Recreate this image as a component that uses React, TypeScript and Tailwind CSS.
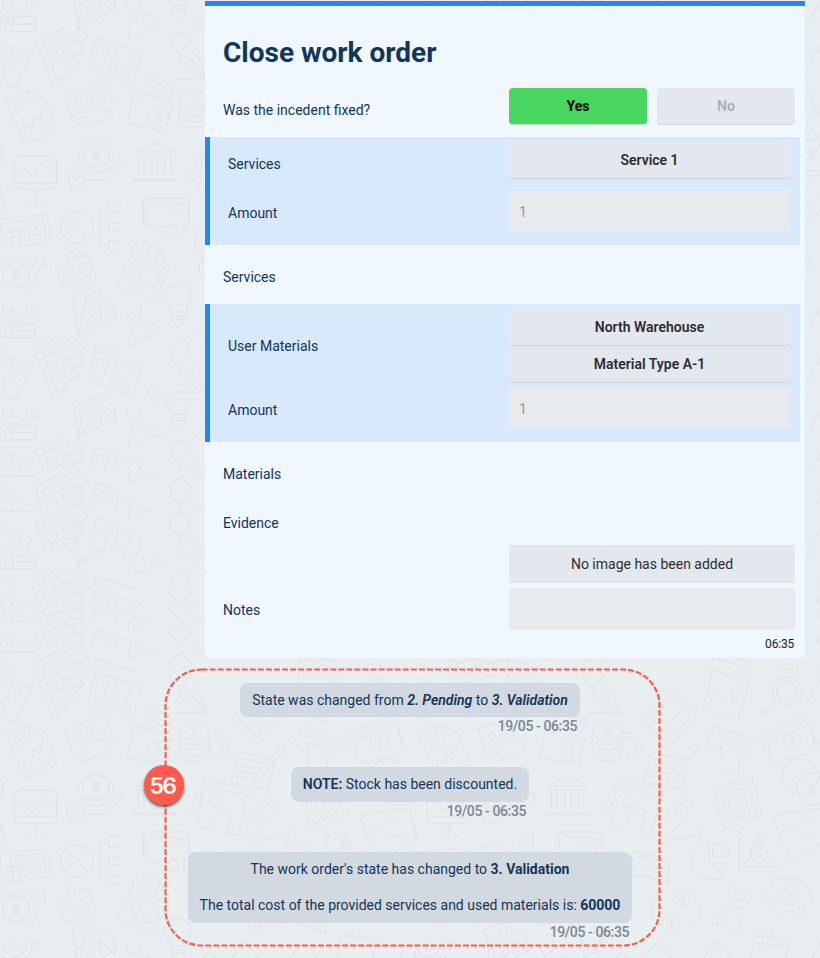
import React from 'react';

const TILE_W = 413;
const TILE_H = 307;

// Each band repeats the doodle tile with its own vertical offset: [top, bottom, offset].
const BANDS: [number, number, number][] = [
  [0, 352, 0],
  [352, 403, 313],
  [403, 471, 409],
  [471, 492, 445],
  [492, 508, 452],
  [508, 525, 480],
  [525, 555, 484],
  [555, 587, 538],
  [587, 605, 551],
  [605, 620, 566],
  [620, 646, 591],
  [646, 670, 621],
  [670, 958, 634],
];

function Dollar({ x, y, r }: { x: number; y: number; r: number }) {
  return (
    <g transform={`translate(${x} ${y})`}>
      <circle r={r} />
      <path d="M3-3C2-5-4-5-3-2C-2 0 3-1 3 2C3 5-3 5-4 2M0-6V6" />
    </g>
  );
}

function Doodles() {
  return (
    <g>
      <g>
        <circle cx="15" cy="3" r="17" />
        <circle cx="15" cy="3" r="12" />
        <path d="M19-2C15-6 12-2 13 2V8H19M10 3H17" />
        <path d="M-6 17H35V31H-6M0 17V31M6 17V31M13 17V31M0 24H35M35-4H40M35 2H40M35 8H38" />
      </g>
      <path d="M73-12L78 29L116 9L114-9L87-18ZM78 29L87-18M78 29L102-7M78 29L114-9M80 5L96-2L114 11" />
      <ellipse cx="134" cy="5" rx="7" ry="9" />
      <path d="M129 39C128 9 149 10 163 24ZM142 18L147 31" />
      <path d="M171 9V14L178 20L185 14V9ZM171 12H185M171 5C158-9 165-23 178-23S197-10 185 5" />
      <path d="M195 26L207 12L222 20M193 24L201 31" />
      <path d="M-8 38L32 54L15 88L-8 77M4 47L-3 60M13 51L4 67M21 55L12 71M-5 66L7 71L0 84" />
      <path d="M36 41L42 38L58 82L53 85ZM44 36L64 29L69 35L84 31L88 37L79 43L84 51L75 56L80 63L64 69L67 76L58 79M45 43L69 35M48 50L80 41M51 58L81 51M54 65L77 57M53 33L56 40M62 42L64 47M73 36L76 43M56 49L58 56M68 46L71 53M62 57L65 63M72 53L74 60" />
      <path d="M96 38L142 53L133 83L88 69ZM98 45L108 48L102 68L93 65ZM118 48L113 60M131 53L126 66M111 64L118 67L116 73L109 71ZM124 68L131 71L129 77L122 74Z" />
      <path d="M169 42L182 31L191 42L178 53ZM180 54C182 65 180 67 206 80C201 63 203 62 192 50M188 55L206 80M174 79H201" />
      <circle cx="205" cy="78" r="4" />
      <path d="M5 99L27 91L45 99L57 131L25 145ZM27 91L31 103L45 99M13 104L24 100M15 109L26 104M17 114L23 111M26 138L24 126L32 129L34 115L40 120L43 106M39 130L49 126M42 134L50 130" />
      <path d="M65 95L106 81L114 106L105 110L111 112L113 117L82 128L79 124L87 119L83 117L73 121ZM75 101L80 98L83 104L78 107ZM86 93L91 92L94 101L88 102ZM98 96L102 94L104 99L99 101ZM79 113L103 105" />
      <path d="M134 92L150 95L153 98L172 104L166 132L127 123ZM141 93L151 73L174 86L168 100M152 81L168 89M150 86L166 94M148 91L160 97M135 99L145 98" />
      <Dollar x={158} y={117} r={10} />
      <g>
        <ellipse cx="194" cy="98" rx="15" ry="8" />
        <path d="M179 98V120C182 130 206 130 209 120V98M179 104C182 113 206 113 209 104M179 109C182 118 206 118 209 109M179 115C182 124 206 124 209 115M196 94C191 92 191 98 195 98S197 103 191 101" />
        <ellipse cx="216" cy="111" rx="11" ry="13" transform="rotate(-35 216 111)" />
        <ellipse cx="216" cy="111" rx="7" ry="9" transform="rotate(-35 216 111)" />
      </g>
      <rect x="14" y="156" width="43" height="33" rx="6" />
      <path d="M14 183H57M18 175L25 168L32 178L42 163L48 171L55 165M36 190V204M27 203L36 193L45 203" />
      <circle cx="96" cy="155" r="17" />
      <Dollar x={96} y={154} r={13} />
      <path d="M66 173L80 166L87 186L72 191ZM80 166L92 164H103C111 164 107 173 96 172H107L119 159C124 157 124 161 121 164L108 180H86M73 175L78 173L80 178L76 180Z" />
      <path d="M134 152L155 141L175 152M137 152H173M138 156H144V174H138ZM152 156H158V174H152ZM165 156H171V174H165ZM133 179H176M134 181H176" />
      <path d="M189 177L205 145L251 157L249 163L206 152L194 180ZM202 156L199 192L210 196L217 178C222 170 233 174 232 183L226 200L237 201L245 178L242 165" />
      <circle cx="215" cy="168" r="5" />
      <path d="M-4 195C3 196 8 206 1 211" />
      <path d="M0 222Q1 218 6 218L43 215Q48 215 48 220L50 239Q50 243 45 243L8 248Q2 248 2 242ZM10 222L24 221V228L10 230ZM28 221L43 219L46 238L30 240ZM4 233L25 231M5 238L26 236M12 231L13 245M19 230L20 244M33 224L39 230M39 223L33 232M35 235L41 234" />
      <circle cx="77" cy="227" r="16" />
      <path d="M66 216L77 227L64 236M77 227L87 237M79 218L83 217M67 223L65 229" />
      <path d="M109 202H120V213H109ZM109 223H120V231H109ZM109 241H120V251H109ZM109 208H100V246H109M100 227H109" />
      <rect x="143" y="198" width="46" height="29" rx="5" />
      <path d="M150 200L177 210Q184 212 184 218V235Q183 241 176 237L151 228Q146 226 146 221V203M162 202L190 207M170 223L178 226" />
      <path d="M207 229C189 227 193 246 200 253M199 262H208V274H199ZM202 253V262" />
      <path d="M-2 257L8 260M4 262C14 257 30 256 33 266L40 257L34 258L43 255L46 269L41 264L32 292L22 287M-3 289L8 284" />
      <Dollar x={16} y={275} r={13} />
      <path d="M55 266L88 254L97 279L63 289ZM69 259L67 253L72 251L75 258M64 284L63 278L74 273L78 281M79 267L87 263M80 273L91 269M82 278L91 274" />
      <circle cx="69" cy="271" r="4" />
      <path d="M117 285L138 239L160 247L169 269L153 301ZM139 248L137 257C137 264 145 263 147 257L151 246C149 240 145 241 143 245L141 254M160 249L154 264L168 270M124 274L138 280L134 285M145 266L139 278L156 288" />
      <ellipse cx="145" cy="277" rx="15" ry="11" transform="rotate(18 145 277)" />
      <path d="M171 309C159 295 166 285 178 285S197 297 185 309M171 312H185" />
      <path d="M72 296L87 288L113 302L115 320M72 296L76 320M87 288L85 305L98 297M85 305L75 318M98 297L101 320" />
      <path d="M233 83L257 60Q260 58 264 62L281 79Q285 83 280 87L260 109Q256 113 252 108L233 88Q230 86 233 83ZM238 84L259 64L278 82L257 103ZM249 85L256 91L266 78" />
      <path d="M302 29L338 42L325 88L290 75ZM301 36L335 48M298 67L305 54L309 68L318 57L320 70L328 52" />
      <circle cx="374" cy="57" r="14" />
      <circle cx="374" cy="57" r="10" />
      <path d="M363 66L349 79Q345 83 351 80L367 68" />
      <path d="M349 109L396 91L408 115L359 130ZM348 103L395 85M347 99L391 82M355 109L358 122M398 96L402 111" />
      <Dollar x={379} y={108} r={9} />
      <path d="M300 95Q302 91 306 93L338 105Q343 107 340 112L332 125L323 120L326 115L307 108L303 117L294 110ZM306 101L332 111M308 109L307 136L325 141L329 116" />
      <path d="M238 118L275 126L268 155L231 149ZM240 124L270 131M241 132L260 135M239 137L258 140M236 142L247 144M255 143L281 111Q286 109 284 116L262 143L254 147ZM277 116L283 120" />
      <path d="M297 156L339 143L349 181L312 196ZM302 159L335 148L344 178L314 190Z" />
      <circle cx="325" cy="169" r="14" />
      <circle cx="325" cy="169" r="9" />
      <path d="M325 169L320 163H329ZM325 169L332 171M325 169L322 176" />
      <circle cx="387" cy="143" r="18" />
      <Dollar x={400} y={155} r={16} />
      <path d="M-2 143C4 149 4 158-2 166" />
      <path d="M245 201L248 189L269 162L281 168L262 196L248 203M265 167L275 174M254 188L269 169M250 210C264 202 277 207 291 196L284 210L299 205" />
      <path d="M361 185Q361 181 367 180L405 175Q410 175 411 180L416 198Q418 204 412 207L384 226Q378 229 376 223L363 193ZM367 200L404 181M387 206L405 198" />
      <path d="M296 211V228L311 242C301 249 279 246 279 229C278 216 286 211 296 211ZM300 210V224L317 222C316 214 309 208 300 210ZM301 230L316 228L309 238" />
      <path d="M326 237V197L322 203M326 197L330 203M325 237H365L361 233M365 237L361 241M331 233L346 205L361 233ZM341 207L345 199L350 207Z" />
      <Dollar x={346} y={219} r={9} />
      <path d="M221 218L257 225L255 248L219 240ZM225 223L251 228M232 231L247 234" />
      <path d="M351 262L360 250L357 243L370 246C379 242 393 246 396 258L399 266L392 273L389 283H382L381 277H371L369 283L363 281L360 272Z" />
      <Dollar x={378} y={262} r={9} />
      <path d="M314 252L342 262M317 253C310 270 323 267 319 273C304 281 306 284 303 292M339 262C337 275 325 270 322 277C331 286 325 292 324 298M300 290L329 299M316 263L333 267" />
      <Dollar x={269} y={263} r={9} />
      <Dollar x={258} y={290} r={9} />
      <path d="M239 283C236 270 242 260 251 255L249 262M281 266C291 274 289 286 277 292L284 294M277 292V284" />
      <path d="M342 301L377 306L370 332M342 301L336 328M349 298V305M359 298V306M341 309L374 313M291 322L304 307L322 329M397 20L409 -2M393 70L407 45M228 20L245 0L260 19L243 35Z" />
    </g>
  );
}

function Wallpaper() {
  return (
    <svg className="absolute inset-0" width="820" height="958" aria-hidden="true">
      <defs>
        <pattern id="doodles" width={TILE_W} height={TILE_H} patternUnits="userSpaceOnUse">
          <g fill="none" stroke="#e4e8eb" strokeWidth="1.8" strokeLinejoin="round" strokeLinecap="round">
            <Doodles />
            <g transform={`translate(0 ${-TILE_H})`}>
              <Doodles />
            </g>
            <g transform={`translate(${-TILE_W} 0)`}>
              <Doodles />
            </g>
          </g>
        </pattern>
      </defs>
      {BANDS.map(([top, bottom, offset]) => (
        <svg
          key={top}
          x="0"
          y={top}
          width="820"
          height={bottom - top}
          viewBox={`0 ${top - offset} 820 ${bottom - top}`}
        >
          <rect x="0" y={top - offset} width="820" height={bottom - top} fill="url(#doodles)" />
        </svg>
      ))}
    </svg>
  );
}

function Choice({ children }: { children: React.ReactNode }) {
  return (
    <button className="block h-[37px] w-full rounded border-b border-[#d0d5d9] bg-[#e2e8ed] text-sm font-semibold text-[#2d2d2f]">
      {children}
    </button>
  );
}

function Field({ value }: { value: string }) {
  return <div className="flex h-10 items-center bg-[#e7ebee] px-2.5 pt-0.5 text-sm text-[#94999d]">{value}</div>;
}

function Notice({ children, time, className }: { children: React.ReactNode; time: string; className: string }) {
  return (
    <div className={className}>
      <div className="rounded-lg bg-[#d2d9e0] text-center">{children}</div>
      <div className="pr-[3px] text-right text-sm leading-[18px] font-medium tracking-[-0.4px] text-[#7b8793]">{time}</div>
    </div>
  );
}

export default function App() {
  return (
    <div className="relative h-[958px] w-[820px] overflow-hidden bg-[#e9eef1] font-['Roboto','Liberation_Sans',sans-serif] text-sm text-[#12355a]">
      <Wallpaper />

      <section className="relative mt-px ml-[205px] h-[657px] w-[600px] border-t-[5px] border-[#2188ee] bg-[#f0f7ff]">
        <h1 className="h-[82px] pt-[29px] pl-[18px] text-[28px] leading-[36px] font-bold">Close work order</h1>
        <div className="flex h-[49px] pl-[18px]">
          <div className="w-[286px] pt-[12px]">Was the incedent fixed?</div>
          <div className="flex gap-2.5">
            <button className="h-[37px] w-[138px] rounded border-b border-[#c9dccf] bg-[#48d560] text-sm font-bold text-black">
              Yes
            </button>
            <button className="h-[37px] w-[138px] rounded border-b border-[#d3d7da] bg-[#e2e8ee] text-sm font-semibold text-[#acb0b4]">
              No
            </button>
          </div>
        </div>

        <div className="mr-[5px] flex h-[108px] border-l-[5px] border-[#2188ee] bg-[#d7e9fb] pt-[5px] pl-[18px]">
          <div className="w-[281px]">
            <div className="pt-[12px]">Services</div>
            <div className="pt-[29px]">Amount</div>
          </div>
          <div className="w-[281px]">
            <Choice>Service 1</Choice>
            <div className="pt-3">
              <Field value="1" />
            </div>
          </div>
        </div>

        <div className="h-[59px] pt-[22px] pl-[18px]">Services</div>

        <div className="mr-[5px] flex h-[138px] border-l-[5px] border-[#2188ee] bg-[#d7e9fb] pt-[5px] pl-[18px]">
          <div className="w-[281px]">
            <div className="pt-[27px]">User Materials</div>
            <div className="pt-[44px]">Amount</div>
          </div>
          <div className="w-[281px]">
            <Choice>North Warehouse</Choice>
            <Choice>Material Type A-1</Choice>
            <div className="pt-[5px]">
              <Field value="1" />
            </div>
          </div>
        </div>

        <div className="pt-[22px] pl-[18px]">Materials</div>
        <div className="pt-[29px] pl-[18px]">Evidence</div>
        <div className="mt-[12px] mr-2.5 ml-[304px] h-[38px] bg-[#e2e8ee] text-center leading-[38px] text-[#2d2d2f]">
          No image has been added
        </div>
        <div className="mt-[5px] flex pl-[18px]">
          <div className="w-[286px] pt-[12px]">Notes</div>
          <div className="h-[42px] w-[286px] bg-[#e7ebee]" />
        </div>
        <div className="pt-[6px] pr-[11px] text-right text-xs tracking-[-0.2px] text-[#1b1b1d]">06:35</div>
      </section>

      <div className="relative flex flex-col items-center pt-[25px]">
        <Notice time="19/05 - 06:35" className="h-[84px] w-[340px]">
          <p className="leading-[34px]">
            State was changed from <em className="font-semibold">2. Pending</em> to{' '}
            <em className="font-semibold">3. Validation</em>
          </p>
        </Notice>
        <Notice time="19/05 - 06:35" className="h-[85px] w-[238px]">
          <p className="leading-[35px]">
            <span className="font-semibold">NOTE:</span> Stock has been discounted.
          </p>
        </Notice>
        <Notice time="19/05 - 06:35" className="w-[444px]">
          <p className="leading-[35px]">
            The work order's state has changed to <b>3. Validation</b>
          </p>
          <p className="pt-px leading-[35px]">
            The total cost of the provided services and used materials is: <b>60000</b>
          </p>
        </Notice>
      </div>

      <svg className="absolute inset-0" width="820" height="958" aria-hidden="true">
        <rect
          x="165.5"
          y="669.5"
          width="494"
          height="276"
          rx="36"
          fill="none"
          stroke="#ff5a4c"
          strokeWidth="2.2"
          strokeDasharray="6 2.05"
        />
      </svg>
      <div className="absolute top-[765px] left-[144px] flex size-10 items-center justify-center rounded-full bg-[#ff5b4d] pt-0.5 pr-[3px] font-['Inter','Roboto',sans-serif] text-[23px] font-semibold tracking-[-1.6px] text-white shadow-[0_2px_3px_rgba(0,0,0,0.6)]">
        56
      </div>
    </div>
  );
}
